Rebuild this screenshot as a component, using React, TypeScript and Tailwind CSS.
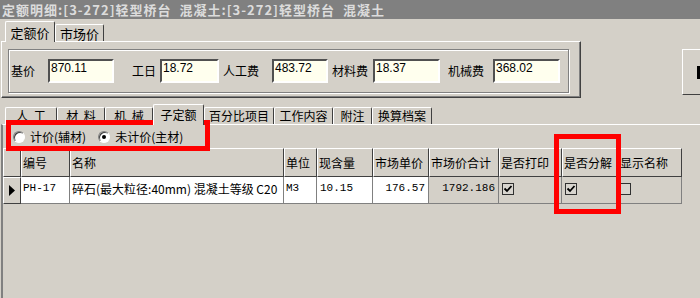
const cols = [
  { key: 'code', title: '编号', w: 'w-[49px]' },
  { key: 'name', title: '名称', w: 'w-[214px]' },
  { key: 'unit', title: '单位', w: 'w-[33px]' },
  { key: 'qty', title: '现含量', w: 'w-[56px]' },
  { key: 'price', title: '市场单价', w: 'w-[56px]' },
  { key: 'total', title: '市场价合计', w: 'w-[70px]' },
  { key: 'print', title: '是否打印', w: 'w-[63px]' },
  { key: 'split', title: '是否分解', w: 'w-[56px]' },
  { key: 'show', title: '显示名称', w: 'w-[64px]' },
];

function Tab({ label, selected, w }: { label: string; selected?: boolean; w: string }) {
  return (
    <div
      className={`${w} ${
        selected ? 'h-[21px] -mb-px z-10 relative bg-[#d4d0c8]' : 'h-[17px]'
      } shrink-0 flex items-center justify-center whitespace-pre border-t border-l border-white border-r border-r-[#404040] rounded-t-[2px] leading-none`}
    >
      {label}
    </div>
  );
}

function Field({ label, lw, ml, iml, iw, value }: { label: string; lw: string; ml: string; iml: string; iw: string; value: string }) {
  return (
    <>
      <span className={`${lw} ${ml} shrink-0 whitespace-nowrap`}>{label}</span>
      <div
        className={`${iw} ${iml} h-[24px] shrink-0 bg-[#ffffee] border-2 border-t-[#505050] border-l-[#505050] border-b-white border-r-white pl-[1px] text-[12px] leading-[14px] font-['Liberation_Sans',sans-serif]`}
      >
        {value}
      </div>
    </>
  );
}

function Check({ on }: { on?: boolean }) {
  return (
    <div className="w-[12px] h-[12px] border border-[#303030] bg-[#d8d5cf] flex items-center justify-center">
      {on && (
        <svg width="10" height="10" viewBox="0 0 10 10">
          <path d="M1.5 4.5 L4 7 L8.5 2" stroke="#000" strokeWidth="1.8" fill="none" />
        </svg>
      )}
    </div>
  );
}

function Radio({ on }: { on?: boolean }) {
  return (
    <div className="w-[12px] h-[12px] rounded-full border border-t-[#808080] border-l-[#808080] border-b-white border-r-white bg-white flex items-center justify-center shadow-[inset_1px_1px_0_#404040]">
      {on && <div className="w-[4px] h-[4px] rounded-full bg-black" />}
    </div>
  );
}

export default function App() {
  return (
    <div className="relative w-[700px] h-[298px] overflow-hidden bg-[#d4d0c8] text-black text-[12px] font-['Noto_Sans_CJK_SC',sans-serif]">
      <div className="h-[19px] bg-[#808080] text-[#dcdcdc] font-bold text-[13px] tracking-[1px] leading-[19px] pl-[2px] whitespace-pre">
        定额明细:[3-272]轻型桥台  混凝土:[3-272]轻型桥台  混凝土
      </div>

      <div className="flex">
        <div className="w-[581px] shrink-0">
          <div className="flex items-end h-[22px] pl-[5px] text-[13px]">
            <Tab label="定额价" selected w="w-[50px]" />
            <Tab label="市场价" w="w-[49px]" />
          </div>
          <div className="h-[57px] ml-[1px] border border-white border-r-[#404040] border-b-[#404040] shadow-[inset_-1px_-1px_0_#808080] pt-[7px] pl-[6px] pr-[11px]">
            <div className="h-[44px] border border-[#808080] shadow-[inset_1px_1px_0_#fff,1px_1px_0_#fff] flex items-center pl-[2px]">
              <Field label="基价" lw="w-[24px]" ml="ml-0" iml="ml-[13px]" iw="w-[66px]" value="870.11" />
              <Field label="工日" lw="w-[24px]" ml="ml-[18px]" iml="ml-[4px]" iw="w-[59px]" value="18.72" />
              <Field label="人工费" lw="w-[36px]" ml="ml-[4px]" iml="ml-[13px]" iw="w-[56px]" value="483.72" />
              <Field label="材料费" lw="w-[36px]" ml="ml-[4px]" iml="ml-[5px]" iw="w-[67px]" value="18.37" />
              <Field label="机械费" lw="w-[36px]" ml="ml-[8px]" iml="ml-[9px]" iw="w-[67px]" value="368.02" />
            </div>
          </div>
        </div>
        <div className="ml-[101px] mt-[30px] w-[30px] h-[46px] shrink-0 border-t border-l border-white border-b border-b-[#404040] flex items-center pl-[14px]">
          <div className="w-[4px] h-[13px] bg-black" />
        </div>
      </div>

      <div className="flex items-end h-[20px] mt-[6px] pl-[5px]">
        <Tab label="人  工" w="w-[52px]" />
        <Tab label="材  料" w="w-[48px]" />
        <Tab label="机  械" w="w-[48px]" />
        <Tab label="子定额" selected w="w-[51px]" />
        <Tab label="百分比项目" w="w-[70px]" />
        <Tab label="工作内容" w="w-[59px]" />
        <Tab label="附注" w="w-[39px]" />
        <Tab label="换算档案" w="w-[60px]" />
      </div>

      <div className="border-t border-white border-l-2 border-l-[#808080] ml-[1px] h-[200px]">
        <div className="h-[23px] flex items-center pl-[10px]">
          <Radio />
          <span className="ml-[5px]">计价(辅材)</span>
          <div className="ml-[12px]">
            <Radio on />
          </div>
          <span className="ml-[5px]">未计价(主材)</span>
        </div>

        <div className="flex h-[29px] w-[680px]">
          <div className="w-[18px] shrink-0 border border-white border-r-[#404040] border-b-[#404040]" />
          {cols.map((c) => (
            <div
              key={c.key}
              className={`${c.w} shrink-0 border border-white border-r-[#404040] border-b-[#404040] flex items-center pl-[1px] whitespace-nowrap overflow-hidden`}
            >
              {c.title}
            </div>
          ))}
        </div>

        <div className="flex h-[27px] w-[680px] font-['Liberation_Mono','Noto_Sans_CJK_SC',monospace] text-[11px]">
          <div className="w-[18px] shrink-0 border border-white border-r-[#404040] border-b-[#404040] flex items-center justify-center">
            <svg width="8" height="11" viewBox="0 0 8 11">
              <path d="M1 0 L7 5.5 L1 11 Z" fill="#000" />
            </svg>
          </div>
          <div className="w-[49px] shrink-0 bg-white border-r border-b border-[#808080] pl-[2px] pt-[3px]">PH-17</div>
          <div className="w-[214px] shrink-0 bg-white border-r border-b border-[#808080] pl-[2px] pt-[3px] whitespace-nowrap font-['Noto_Sans_CJK_SC',sans-serif] text-[12px]">
            碎石(最大粒径:40mm) 混凝土等级 C20
          </div>
          <div className="w-[33px] shrink-0 bg-white border-r border-b border-[#808080] pl-[2px] pt-[3px]">M3</div>
          <div className="w-[56px] shrink-0 bg-white border-r border-b border-[#808080] pl-[3px] pt-[3px]">10.15</div>
          <div className="w-[56px] shrink-0 bg-white border-r border-b border-[#808080] pr-[3px] pt-[3px] text-right">176.57</div>
          <div className="w-[70px] shrink-0 border-r border-b border-[#808080] pr-[3px] pt-[3px] text-right">1792.186</div>
          <div className="w-[63px] shrink-0 border-r border-b border-[#808080] pl-[3px] pt-[6px]">
            <Check on />
          </div>
          <div className="w-[56px] shrink-0 border-r border-b border-[#808080] pl-[3px] pt-[6px]">
            <Check on />
          </div>
          <div className="w-[64px] shrink-0 border-r border-b border-[#808080] pl-[1px] pt-[6px]">
            <Check />
          </div>
        </div>
      </div>

      <div className="absolute left-[6px] top-[120px] w-[204px] h-[31px] border-[5px] border-[#f00]" />
      <div className="absolute left-[554px] top-[134px] w-[67px] h-[80px] border-[5px] border-[#f00]" />
    </div>
  );
}
